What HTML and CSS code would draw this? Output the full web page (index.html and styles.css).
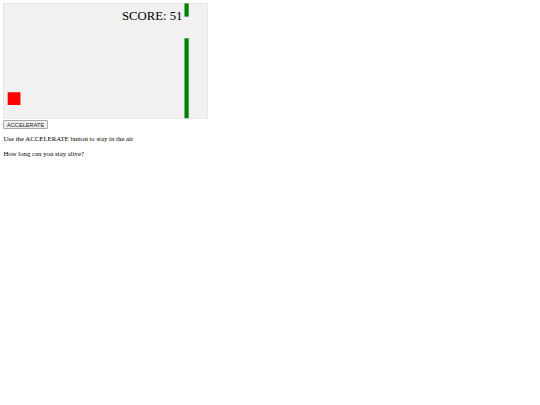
FILE: index.html
```html
<!DOCTYPE html>
<html>
<head>
<meta charset="utf-8">
<link rel="stylesheet" href="styles.css">
</head>
<body>
<svg class="game" viewBox="-1 -1 482 272" xmlns="http://www.w3.org/2000/svg">
  <rect x="-0.5" y="-0.5" width="481" height="271" fill="#f1f1f1" stroke="#d3d3d3" stroke-width="1"/>
  <rect x="10" y="209" width="30" height="30" fill="#ff0000"/>
  <rect x="426" y="0" width="10" height="31" fill="#008000"/>
  <rect x="426" y="82" width="10" height="188" fill="#008000"/>
  <text class="score" x="279" y="40">SCORE: 51</text>
</svg>
<div class="controls"><button class="btn">ACCELERATE</button></div>
<p class="note">Use the ACCELERATE button to stay in the air</p>
<p class="note">How long can you stay alive?</p>
</body>
</html>
```
FILE: styles.css
```css
html, body {
  background: #ffffff;
}
body {
  margin: 3.4px;
  font-family: "Liberation Serif", serif;
  font-size: 6.8px;
  color: #000000;
}
.game {
  display: block;
  width: 204.85px;
  height: 115.6px;
}
.score {
  font-family: "Liberation Serif", serif;
  font-size: 30px;
  fill: #000000;
}
.controls {
  margin-top: 1px;
  display: flex;
}
.btn {
  font-family: "Liberation Sans", sans-serif;
  font-size: 5.67px;
  height: 9px;
  padding: 0 2.6px;
  line-height: 9px;
  color: #222222;
  background: #efefef;
  border: 1px solid #a8a8a8;
  border-radius: 1px;
}
.note {
  margin: 6.4px 0;
  line-height: 7.8px;
}
```
